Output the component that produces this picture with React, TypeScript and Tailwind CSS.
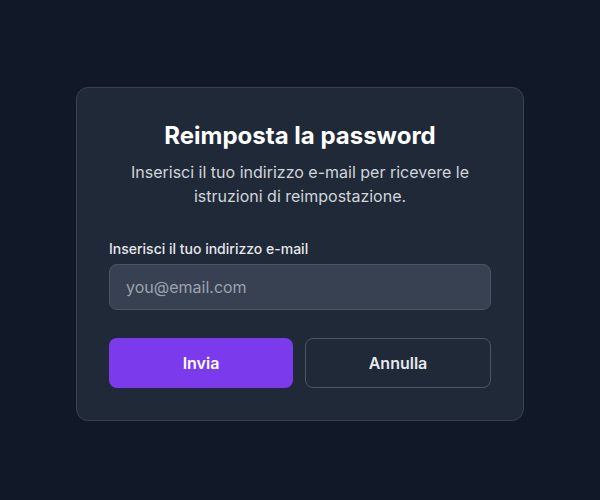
import React from "react";

export default function App() {
  return (
    <div
      className="min-h-[500px] w-full bg-[#111827] flex items-center justify-center pt-2"
      style={{ fontFamily: "Inter, 'Noto Sans', sans-serif" }}
    >
      <div className="w-[448px] rounded-xl border border-[#374151] bg-[#1f2937] p-8">
        <h1 className="text-center text-2xl font-bold text-white leading-8">
          Reimposta la password
        </h1>
        <p className="mt-2 text-center text-base leading-6 text-[#d1d5db]">
          Inserisci il tuo indirizzo e-mail per ricevere le istruzioni di reimpostazione.
        </p>
        <div className="mt-[31px]">
          <label className="mb-[5px] block text-sm font-medium leading-5 text-[#e5e7eb]">
            Inserisci il tuo indirizzo e-mail
          </label>
          <input
            type="email"
            placeholder="you@email.com"
            className="block w-full rounded-lg border border-[#4b5563] bg-[#374151] px-4 py-2.5 text-base leading-6 text-white placeholder-[#9ca3af] outline-none"
          />
        </div>
        <div className="mt-7 flex gap-3">
          <button className="flex-1 rounded-lg bg-[#7c3aed] py-[13px] text-base font-semibold leading-6 text-white">
            Invia
          </button>
          <button className="flex-1 rounded-lg border border-[#4b5563] bg-transparent py-3 text-base font-semibold leading-6 text-[#e5e7eb]">
            Annulla
          </button>
        </div>
      </div>
    </div>
  );
}
